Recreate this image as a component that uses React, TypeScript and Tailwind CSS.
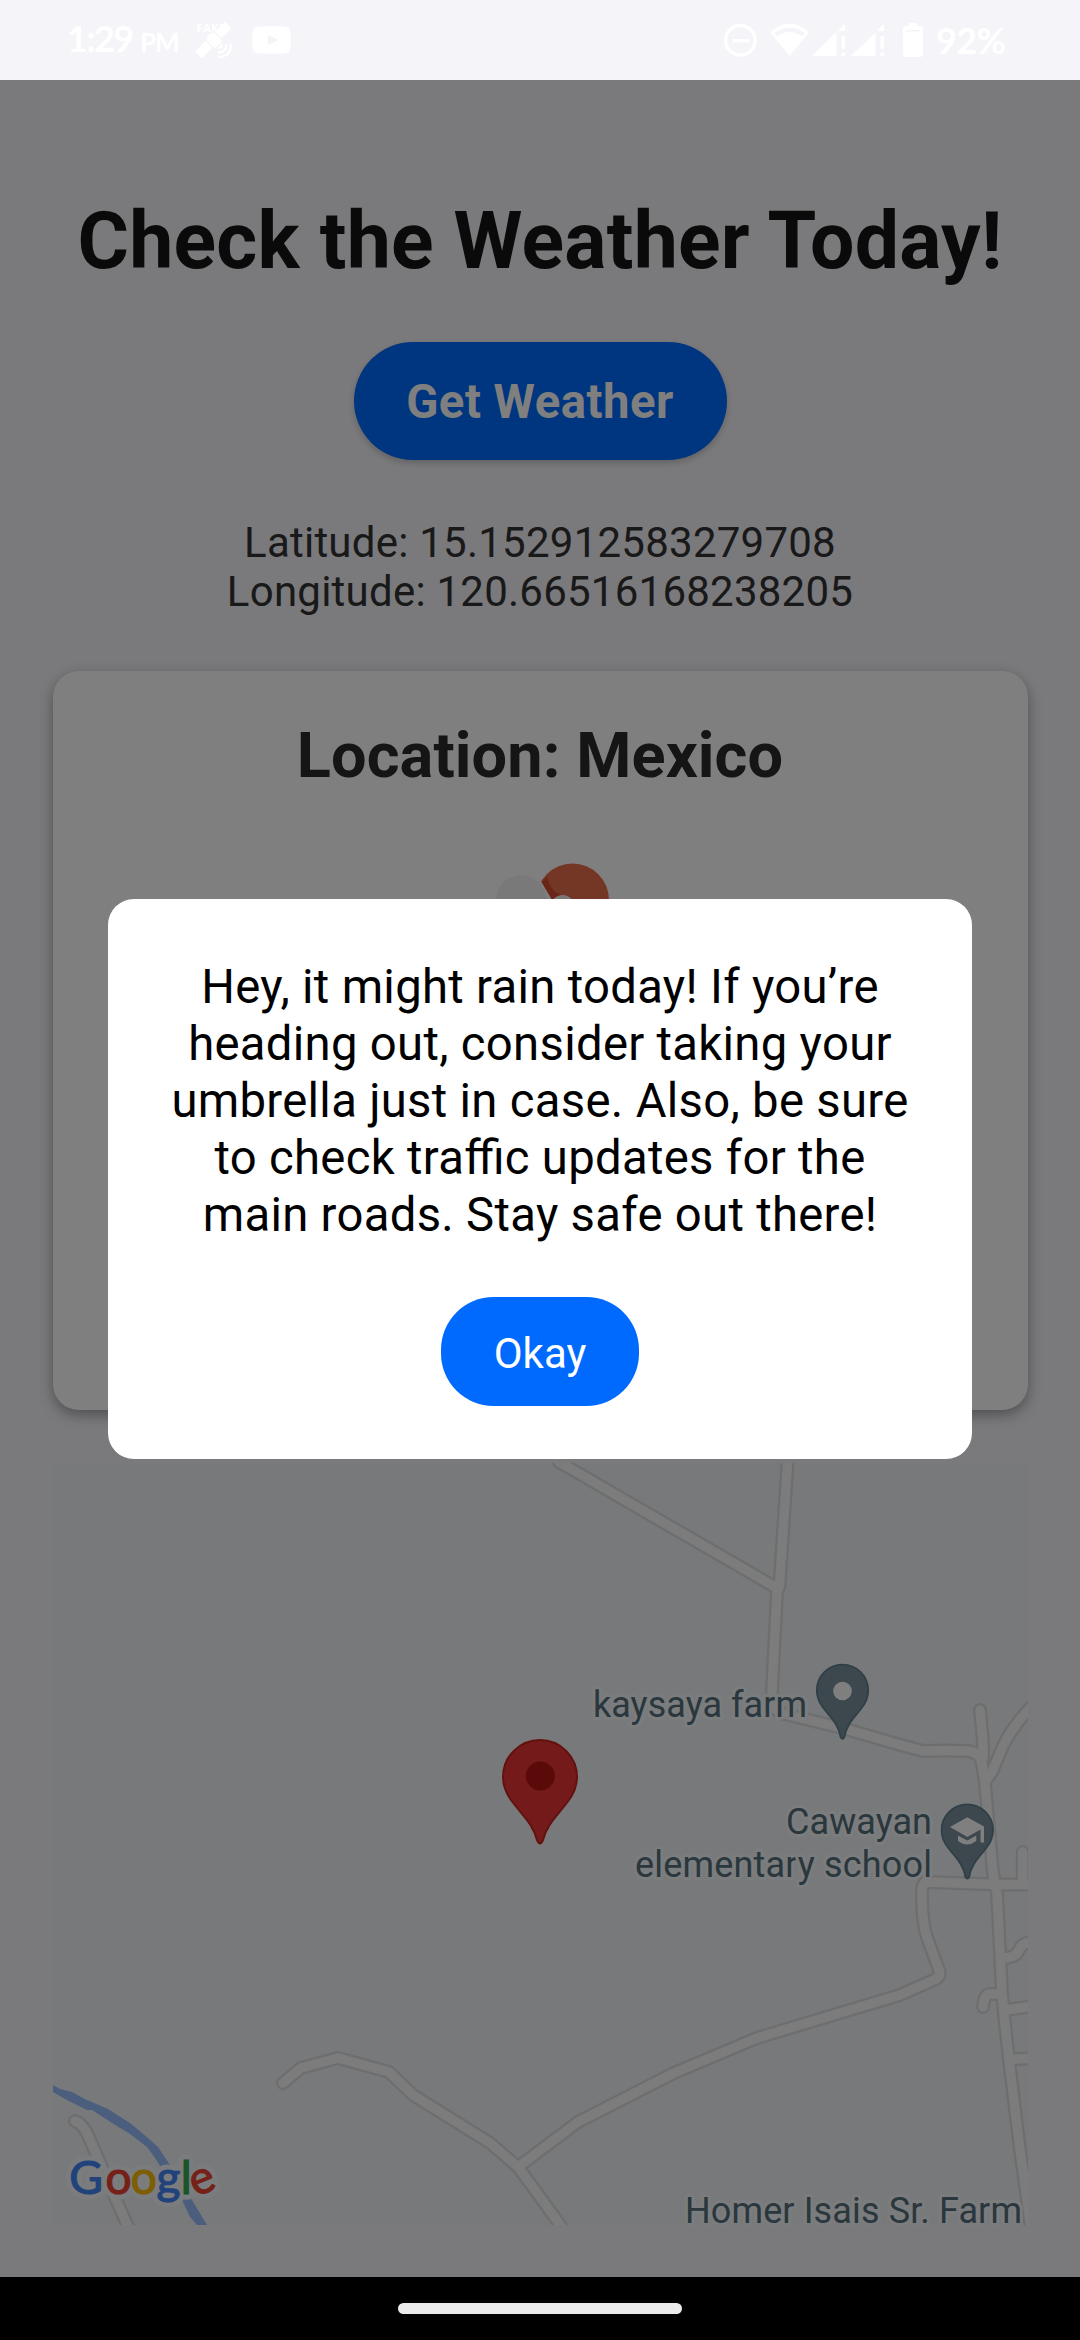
import React from "react";

const LABEL = {
  fill: "#546e7a",
  stroke: "#f6f9fa",
  strokeWidth: 6,
  strokeLinejoin: "round" as const,
  paintOrder: "stroke" as const,
  fontFamily: "Roboto, sans-serif",
  fontSize: 36,
};

const ROADS = [
  "M559 1462L775 1587",
  "M787.7 1460L779.5 1586L777 1592L772 1690Q771 1711 784 1714L842 1728L897 1744L923 1751Q945 1750 967 1751Q981 1752 982 1764L985 1783L993 1873L997 1893L1002 1993L1005.6 2030L1009 2060L1020 2150L1031 2228",
  "M980 1710L983 1742L983 1758",
  "M1034 1704Q1014 1724 1003 1746L992 1772L986 1780",
  "M1034 1884.5L997 1884.5L927 1882Q922 1882 922 1894Q922 1925 928 1940L939 1970Q941 1976 936 1979L900 1995L860 2007L757 2038L674 2073L578 2122L518 2167",
  "M1022.7 1852L1022.7 1884",
  "M1003 1958Q1016 1958 1019 1950T1034 1942",
  "M1001 1994L990 1994Q984 1994 983 2007",
  "M1005 2010L1034 2006",
  "M1010 2059.5L1034 2058",
  "M283 2083L301 2068L338 2058L389 2072L413 2095L490 2143L518 2167L540 2197L563 2229",
  "M75 2121Q84 2124 90 2140L107 2179L129 2229",
];

const LOGO: { c: string; x: number; color: string; rotate?: string }[] = [
  { c: "G", x: 69.3, color: "#4285f4" },
  { c: "o", x: 105.6, color: "#ea4335" },
  { c: "o", x: 130.8, color: "#fbbc04" },
  { c: "g", x: 156.4, color: "#4285f4" },
  { c: "l", x: 180.8, color: "#34a853" },
  { c: "e", x: 190.6, color: "#ea4335", rotate: "rotate(-22 202 2182.5)" },
];

function Pin({ x, y, fill, edge }: { x: number; y: number; fill: string; edge: string }) {
  return (
    <path
      transform={`translate(${x} ${y})`}
      d="M0-25.7A25.7 25.7 0 0 0-25.7 0C-25.7 8-23 13-19 18C-12 27-4 34-1.8 47Q0 50 1.8 47C4 34 12 27 19 18C23 13 25.7 8 25.7 0A25.7 25.7 0 0 0 0-25.7Z"
      fill={fill}
      stroke={edge}
      strokeWidth="1.8"
    />
  );
}

function GoogleMap() {
  return (
    <svg className="block h-[762px] w-[975px] overflow-visible bg-[#f0f3f5]" viewBox="53 1463 975 762">
      <clipPath id="map-bounds">
        <rect x="53" y="1463" width="975" height="762" />
      </clipPath>
      <path
        d="M53 2085L60 2089L72 2092L85 2099L108 2109L130 2123L148 2138L158 2147L170 2165L192 2200L207 2225H197L190 2217L182 2200L155 2158L147 2147L130 2134L112 2123L92 2110H87L65 2099L53 2092Z"
        fill="#98bdfa"
      />
      <g clipPath="url(#map-bounds)" fill="none" strokeLinecap="round" strokeLinejoin="round">
        <g stroke="#dadcde" strokeWidth="14">
          {ROADS.map((d) => <path key={d} d={d} />)}
        </g>
        <g stroke="#f9f8f8" strokeWidth="9.400">
          {ROADS.map((d) => <path key={d} d={d} />)}
        </g>
      </g>
      <text x="593" y="1716.7" textLength="214" {...LABEL}>kaysaya farm</text>
      <text x="786" y="1834.3" textLength="146" {...LABEL}>Cawayan</text>
      <text x="635" y="1877" textLength="297" {...LABEL}>elementary school</text>
      <text x="685" y="2222.7" textLength="337" {...LABEL}>Homer Isais Sr. Farm</text>
      <Pin x={842.5} y={1690.3} fill="#78909c" edge="#607d8b" />
      <circle cx="842.5" cy="1691" r="9.3" fill="#fff" />
      <Pin x={967.3} y={1830} fill="#78909c" edge="#607d8b" />
      <path
        d="M967.3 1817.3L984 1826.5V1842.5H980.5V1829.5L967.3 1837L950 1827ZM958 1835.5L967.3 1840.5L976.3 1835.5V1841Q967.3 1848 958 1841Z"
        fill="#fff"
      />
      <path
        d="M540 1740A37 37 0 0 0 503 1777C503 1788 507 1795 512.5 1802C523 1816 533 1824 537 1840Q540 1847 543 1840C547 1824 557 1816 567.5 1802C573 1795 577 1788 577 1777A37 37 0 0 0 540 1740Z"
        fill="#e93535"
        stroke="#c5221f"
        strokeWidth="2"
      />
      <circle cx="540.3" cy="1776" r="14.5" fill="#b31412" />
      <g fontFamily="Lato, sans-serif" fontSize="46" fill="none" stroke="#f6f9fa" strokeWidth="11" strokeLinejoin="round">
        {LOGO.map((l) => <text key={l.x} x={l.x} y="2193.5" transform={l.rotate} aria-hidden="true">{l.c}</text>)}
      </g>
      <g fontFamily="Lato, sans-serif" fontSize="46" strokeWidth="1.2">
        {LOGO.map((l) => <text key={l.x} x={l.x} y="2193.5" transform={l.rotate} fill={l.color} stroke={l.color}>{l.c}</text>)}
      </g>
    </svg>
  );
}

function StatusBar() {
  return (
    <header className="flex h-20 items-center justify-between bg-[#f4f4f9] pl-[67px] pr-[73px] font-['Lato'] font-bold text-white">
      <div className="flex items-center">
        <div className="flex w-[128px] items-baseline whitespace-nowrap leading-[44px]">
          <span className="w-[73px] text-[36px] tracking-[-1.6px]">1:29</span>
          <span className="text-[26px] font-bold tracking-[-1px]">PM</span>
        </div>
        <svg className="h-[38px] w-[39px]" viewBox="195 22 39 38" fill="#fff">
          <text x="196.5" y="32.5" fontSize="11" fontFamily="Open Sans, sans-serif" fontWeight="700" letterSpacing="0.4">FAKE</text>
          <path d="M225 23L231 29.5L219.5 41L213 34.5ZM202 59L195.5 52.5L207 41L213.5 47Z" stroke="#fff" strokeWidth="1" />
          <rect x="206.5" y="35" width="15" height="12" rx="3.5" transform="rotate(45 214 41)" stroke="#f4f4f9" />
          <path d="M218 49Q222 49 222 45M218 53.5Q226.5 53.5 226.5 45M218 58Q231 58 231 45" fill="none" stroke="#fff" strokeWidth="2.2" />
        </svg>
        <svg className="ml-[18px] h-7 w-[39px]" viewBox="0 0 39 28">
          <path d="M7 .5Q19.5-.5 32 .5Q38 .8 38.5 6Q39.3 14 38.5 22Q38 27 32 27.4Q19.5 28.3 7 27.4Q1 27 .5 22Q-.3 14 .5 6Q1 .8 7 .5Z" fill="#fff" />
          <path d="M16 8.5L26.5 14L16 19.5Z" fill="#f4f4f9" />
        </svg>
      </div>
      <div className="flex items-center">
        <svg className="mr-[6px] h-[38px] w-[208px]" viewBox="722 21 208 38" fill="#fff">
          <circle cx="740.4" cy="40.3" r="14.8" fill="none" stroke="#fff" strokeWidth="3.3" />
          <path d="M732.5 39h16.5v3.3h-16.5z" />
          <path d="M770 32.5Q789.5 14.5 809 32.5L789.5 56Z" />
          <path d="M774 33.500Q789.5 21.5 805 33.5L802 36.300Q789.5 27.500 777 36.300Z" fill="#f4f4f9" />
          {[0, 39].map((dx) => (
            <g key={dx} transform={`translate(${dx} 0)`}>
              <path d="M812 56L836.5 32V56ZM838.5 30L845 23.5V31H838.5ZM841.5 36h3.5v13h-3.5zM841.5 52.500h3.500v3.500h-3.500z" />
            </g>
          ))}
          <path d="M909 23h8v3h3q3 0 3 3v25q0 3-3 3h-14q-3 0-3-3v-25q0-3 3-3h3z" />
          <path d="M906 30h14v1.5h-14z" fill="#f4f4f9" />
        </svg>
        <span className="w-[71px] whitespace-nowrap text-[36px] leading-[44px] tracking-[-0.6px]">92%</span>
      </div>
    </header>
  );
}

function WeatherIcon() {
  return (
    <svg className="mx-auto mt-[46px] block h-[220px] w-[220px]" viewBox="430 838 220 220">
      <circle cx="572.5" cy="899" r="36.5" fill="#eb6e4b" />
      <path d="M541 882L547 876Q550 890 560 893L566 902L550 902Z" fill="#c93a1e" opacity=".7" />
      <path d="M530 876L541.500 881Q546 889 551 897L551 930H530Z" fill="#fff" />
      <circle cx="562.5" cy="906" r="12" fill="#f5efed" />
      <circle cx="521" cy="899" r="25" fill="#f2f2f2" />
      <rect x="480" y="902" width="124" height="62" rx="31" fill="#f2f2f2" />
    </svg>
  );
}

export default function App() {
  return (
    <div className="flex h-[2340px] w-[1080px] flex-col overflow-hidden bg-[#f4f4f9] font-['Roboto'] [font-feature-settings:'liga'_1]">
      <StatusBar />
      <div className="relative h-[2197px]">
        <main className="flex flex-col items-center px-[52.5px] pt-[115px] text-center">
          <h1 className="whitespace-nowrap text-[78.75px] font-bold leading-[92px] tracking-[0.25px] text-[#141414]">Check the Weather Today!</h1>
          <button className="mt-[55px] h-[118px] w-[373px] rounded-full bg-[#006aff] pt-[3px] text-[47.25px] font-bold leading-[55px] tracking-[0.5px] text-white shadow-[0_3px_6px_rgba(0,0,0,0.2)]">
            Get Weather
          </button>
          <p className="mt-[58px] text-[42px] leading-[49px] tracking-[0.24px] text-[#333]">
            Latitude: 15.152912583279708
            <br />
            Longitude: 120.66516168238205
          </p>
          <section className="mt-[55px] h-[739px] w-[975px] rounded-[26px] bg-white pt-[48px] shadow-[0_5px_14px_rgba(0,0,0,0.35)]">
            <h2 className="text-[63px] font-bold leading-[74px] tracking-[0.1px] text-[#2a2a2a]">Location: Mexico</h2>
            <WeatherIcon />
          </section>
          <div className="mt-[53px]">
            <GoogleMap />
          </div>
        </main>
        <div className="absolute inset-0 flex items-center justify-center bg-black/50">
          <div role="dialog" className="flex h-[560px] w-[864px] flex-col items-center rounded-[26px] bg-white pt-[60px] text-center">
            <p className="whitespace-nowrap text-[47.25px] leading-[57px] tracking-[0.3px] text-black">
              Hey, it might rain today! If you’re
              <br />
              heading out, consider taking your
              <br />
              umbrella just in case. Also, be sure
              <br />
              to check traffic updates for the
              <br />
              main roads. Stay safe out there!
            </p>
            <button className="mt-[53px] h-[109px] w-[198px] rounded-[52.5px] bg-[#006aff] pt-[4px] text-[42px] leading-[49px] text-white">Okay</button>
          </div>
        </div>
      </div>
      <footer className="flex h-[63px] items-center justify-center bg-black">
        <div className="h-[11px] w-[284px] rounded-full bg-[#ebebeb]" />
      </footer>
    </div>
  );
}
